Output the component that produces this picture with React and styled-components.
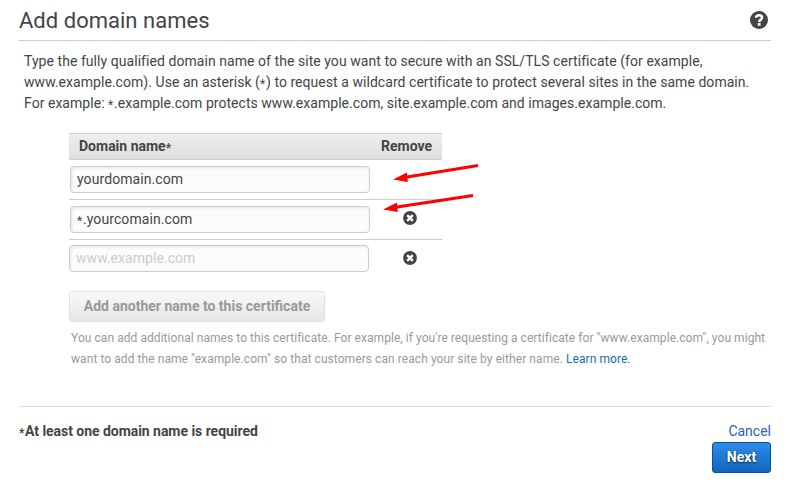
import React from "react";
import styled, { createGlobalStyle } from "styled-components";

const Global = createGlobalStyle`
  * { box-sizing: border-box; }
  body { margin: 0; background: #fff; color: #444; font: 14px/21px Roboto, "Liberation Sans", sans-serif; }
`;
const Page = styled.main`
  position: relative;
  width: 790px;
  height: 497px;
  padding-left: 19px;
  overflow: hidden;
  display: flex;
  flex-direction: column;
`;
const Header = styled.header`
  width: 752px;
  height: 41px;
  border-bottom: 1px solid #ccc;
  display: flex;
  justify-content: space-between;
  padding: 6px 3px 0 0;
`;
const Title = styled.h1`
  margin: 0;
  font-size: 22px;
  line-height: 30px;
  font-weight: 400;
  white-space: nowrap;
  letter-spacing: 0.02px;
`;
const HelpIcon = styled.svg`
  width: 18px;
  height: 18px;
  margin-top: 5px;
`;
const Intro = styled.div`
  height: 92px;
  padding: 10px 0 0 5px;
`;
const Line = styled.div`
  height: 21px;
  white-space: nowrap;
  letter-spacing: ${(p) => p.$spacing || "0"};
`;
const Star = styled.span`
  display: inline-block;
  height: 14px;
  width: 6px;
  font-size: 12px;
  line-height: 14px;
  vertical-align: -1px;
`;
const Table = styled.section`
  width: 373px;
  margin-left: 50px;
`;
const TableHead = styled.div`
  height: 27px;
  display: flex;
  justify-content: space-between;
  padding: 2px 10px 0;
  font-weight: 700;
  background: linear-gradient(#eee, #dedede);
  border: solid #ccc;
  border-width: 1px 0;
`;
const Row = styled.div`
  height: ${(p) => (p.$last ? "39px" : "40px")};
  display: flex;
  align-items: flex-start;
  padding: ${(p) => (p.$last ? "5px 0 0" : "6px 0 0 1px")};
  border-bottom: ${(p) => (p.$last ? "0" : "1px solid #ccc")};
`;
const Field = styled.div`
  width: 300px;
  height: 27px;
  padding: 2px 6px;
  border: 1px solid #ccc;
  border-radius: 4px;
  background: #fcfcfc;
  box-shadow: inset 1px 1px 3px #e4e4e4;
  color: ${(p) => (p.$empty ? "#ccc" : "#444")};
  white-space: nowrap;
  letter-spacing: ${(p) => (p.$empty ? "0.05px" : "0.08px")};
`;
const Remove = styled.button`
  width: 14px;
  height: 14px;
  padding: 0;
  border: 0;
  background: none;
  margin: ${(p) => (p.$last ? "6px 0 0 34px" : "5px 0 0 33px")};
  svg { display: block; width: 14px; height: 14px; }
`;
const Button = styled.button`
  padding: 0;
  border-radius: 3px;
  font: 700 14px/21px Roboto, "Liberation Sans", sans-serif;
  white-space: nowrap;
`;
const AddButton = styled(Button)`
  width: 256px;
  height: 31px;
  margin: 12px 0 0 50px;
  color: #999;
  border: 1px solid #e0e0e0;
  background: linear-gradient(#f9f9f9, #e6e6e6);
`;
const Hint = styled.div`
  height: 84px;
  padding: 6px 0 0 52px;
  color: #999;
  font-size: 12px;
`;
const Link = styled.a`
  color: #146eb4;
  text-decoration: none;
`;
const Footer = styled.footer`
  width: 752px;
  border-top: 1px solid #ddd;
  display: flex;
  justify-content: space-between;
  padding-top: 14px;
`;
const Required = styled.div`
  font-weight: 700;
  white-space: nowrap;
  letter-spacing: -0.04px;
`;
const Actions = styled.div`
  display: flex;
  flex-direction: column;
  align-items: flex-end;
`;
const Cancel = styled.a`
  color: #2a61b8;
`;
const NextButton = styled(Button)`
  width: 59px;
  height: 31px;
  color: #fff;
  border: 1px solid #0b4e93;
  background: linear-gradient(#2d8ceb, #1166bb);
  text-shadow: 0 1px 2px #123;
`;
const Arrows = styled.svg`
  position: absolute;
  left: 0;
  top: 0;
  width: 790px;
  height: 497px;
  pointer-events: none;
`;

function RemoveIcon() {
  return (
    <svg viewBox="0 0 14 14">
      <circle cx="7" cy="7" r="6.9" fill="#444" />
      <path d="M4.2 4.2l5.6 5.6M9.8 4.2L4.2 9.8" stroke="#fff" strokeWidth="2.4" />
    </svg>
  );
}

export default function App() {
  return (
    <Page>
      <Global />
      <Header>
        <Title>Add domain names</Title>
        <HelpIcon viewBox="0 0 18 18">
          <circle cx="9" cy="9" r="9" fill="#444" />
          <path d="M6 6.8C6.1 4.9 7.2 4.2 9 4.2s3 .9 3 2.5c0 2.1-2.8 2-2.8 4.3" fill="none" stroke="#fff" strokeWidth="2.5" />
          <path d="M7.8 12h2.8v2.7H7.8z" fill="#fff" />
        </HelpIcon>
      </Header>
      <Intro>
        <Line $spacing="0.055px">Type the fully qualified domain name of the site you want to secure with an SSL/TLS certificate (for example,</Line>
        <Line $spacing="0.048px">www.example.com). Use an asterisk (<Star>*</Star>) to request a wildcard certificate to protect several sites in the same domain.</Line>
        <Line $spacing="0.035px">For example: <Star>*</Star>.example.com protects www.example.com, site.example.com and images.example.com.</Line>
      </Intro>
      <Table>
        <TableHead><span>Domain name<Star>*</Star></span><span>Remove</span></TableHead>
        <Row><Field>yourdomain.com</Field></Row>
        <Row><Field><Star>*</Star>.yourcomain.com</Field><Remove aria-label="Remove"><RemoveIcon /></Remove></Row>
        <Row $last><Field $empty>www.example.com</Field><Remove $last aria-label="Remove"><RemoveIcon /></Remove></Row>
      </Table>
      <AddButton>Add another name to this certificate</AddButton>
      <Hint>
        <Line $spacing="0.057px">You can add additional names to this certificate. For example, if you're requesting a certificate for "www.example.com", you might</Line>
        <Line $spacing="0.07px">want to add the name "example.com" so that customers can reach your site by either name. <Link>Learn more.</Link></Line>
      </Hint>
      <Footer>
        <Required><Star>*</Star>At least one domain name is required</Required>
        <Actions><Cancel>Cancel</Cancel><NextButton>Next</NextButton></Actions>
      </Footer>
      <Arrows viewBox="0 0 790 497" fill="#f00" stroke="#f00">
        <path d="M478 165.5L407 177M473 195.5L397 207" strokeWidth="3" />
        <path d="M393 179.5l14-7 .8 9.5zM383 209.5l14-7 .8 9.5z" stroke="none" />
      </Arrows>
    </Page>
  );
}
